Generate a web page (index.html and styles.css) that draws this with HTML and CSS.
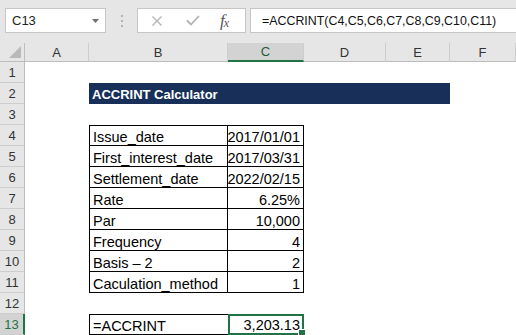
FILE: index.html
```html
<!DOCTYPE html>
<html>
<head>
<meta charset="utf-8">
<link rel="stylesheet" href="styles.css">
</head>
<body>
<div class="app">
  <div class="toolbar">
    <div class="namebox">
      <span>C13</span>
      <svg class="dd" width="7" height="4" viewBox="0 0 7 4"><path d="M0 0H7L3.5 4Z" fill="#6f6f6f"/></svg>
    </div>
    <div class="grip"><i></i><i></i><i></i></div>
    <div class="fbtns">
      <svg class="ic" width="12" height="12" viewBox="0 0 12 12"><path d="M1.5 1.5L10.5 10.5M10.5 1.5L1.5 10.5" stroke="#b3b3b3" stroke-width="1.3" fill="none"/></svg>
      <svg class="ic" width="14" height="11" viewBox="0 0 14 11"><path d="M1 5.5L5 9.5L13 1" stroke="#b3b3b3" stroke-width="1.8" fill="none"/></svg>
      <span class="fx">f<sub>x</sub></span>
    </div>
    <div class="formula">=ACCRINT(C4,C5,C6,C7,C8,C9,C10,C11)</div>
  </div>

  <div class="sheet">
    <div class="row hdr">
      <div class="ch corner"><svg width="12" height="12" viewBox="0 0 12 12"><path d="M12 0V12H0Z" fill="#b9b9b9"/></svg></div>
      <div class="ch">A</div>
      <div class="ch">B</div>
      <div class="ch selc">C</div>
      <div class="ch">D</div>
      <div class="ch">E</div>
      <div class="ch">F</div>
    </div>

    <div class="row"><div class="rh">1</div></div>
    <div class="row"><div class="rh">2</div><div></div><div class="title">ACCRINT Calculator</div></div>
    <div class="row"><div class="rh">3</div></div>
    <div class="row"><div class="rh">4</div><div></div><div class="c lb top">Issue_date</div><div class="c rb top num">2017/01/01</div></div>
    <div class="row"><div class="rh">5</div><div></div><div class="c lb">First_interest_date</div><div class="c rb num">2017/03/31</div></div>
    <div class="row"><div class="rh">6</div><div></div><div class="c lb">Settlement_date</div><div class="c rb num">2022/02/15</div></div>
    <div class="row"><div class="rh">7</div><div></div><div class="c lb">Rate</div><div class="c rb num">6.25%</div></div>
    <div class="row"><div class="rh">8</div><div></div><div class="c lb">Par</div><div class="c rb num">10,000</div></div>
    <div class="row"><div class="rh">9</div><div></div><div class="c lb">Frequency</div><div class="c rb num">4</div></div>
    <div class="row"><div class="rh">10</div><div></div><div class="c lb">Basis – 2</div><div class="c rb num">2</div></div>
    <div class="row"><div class="rh">11</div><div></div><div class="c lb">Caculation_method</div><div class="c rb num">1</div></div>
    <div class="row"><div class="rh">12</div></div>
    <div class="row"><div class="rh selr">13</div><div></div><div class="c box">=ACCRINT</div><div class="c sel num">3,203.13</div></div>
  </div>
</div>
</body>
</html>
```

FILE: styles.css
```css
* { box-sizing: border-box; }
html, body { margin: 0; padding: 0; }
body {
  background: #ffffff;
  width: 516px;
  height: 335px;
  overflow: hidden;
  font-family: "Liberation Sans", Arial, sans-serif;
}
.app { width: 516px; }

.toolbar {
  height: 43px;
  background: #e6e6e6;
  display: flex;
  align-items: flex-start;
  padding: 8px 0 0 5px;
}
.namebox {
  width: 101px;
  height: 25px;
  background: #fff;
  border: 1px solid #c6c6c6;
  display: flex;
  align-items: center;
  justify-content: space-between;
  padding: 0 6px 0 6px;
  font-size: 13px;
  color: #222;
}
.dd { margin-top: 1px; }
.grip {
  width: 31px;
  height: 25px;
  display: flex;
  flex-direction: column;
  align-items: center;
  justify-content: center;
  gap: 3px;
}
.grip i {
  display: block;
  width: 2px;
  height: 2px;
  background: #b2b2b2;
}
.fbtns {
  width: 109px;
  height: 25px;
  background: #fff;
  border: 1px solid #c6c6c6;
  display: flex;
  align-items: center;
  padding-left: 13px;
}
.fbtns .ic:nth-child(1) { margin-right: 23px; }
.fbtns .ic:nth-child(2) { margin-right: 20px; }
.fx {
  font-family: "Liberation Serif", "DejaVu Serif", serif;
  font-style: italic;
  font-size: 17px;
  color: #555;
  letter-spacing: -1px;
  line-height: 1;
}
.fx sub { font-size: 12px; vertical-align: -1px; }
.formula {
  flex: 1;
  height: 25px;
  margin-left: 4px;
  background: #fff;
  border: 1px solid #c6c6c6;
  border-right: none;
  display: flex;
  align-items: center;
  padding-left: 11px;
  font-size: 12.4px;
  color: #111;
  white-space: nowrap;
}

.sheet { background: #fff; }
.row {
  display: grid;
  grid-template-columns: 25px 64px 139px 76px 82px 64px 1fr;
  height: 21px;
}
.row.hdr { height: 19px; background: #e6e6e6; }
.ch {
  border-right: 1px solid #cdcdcd;
  border-bottom: 1px solid #bdbdbd;
  display: flex;
  align-items: center;
  justify-content: center;
  font-size: 13px;
  color: #333;
}
.ch.corner {
  justify-content: flex-end;
  align-items: flex-end;
  padding: 0 3px 3px 0;
  border-right: 1px solid #bdbdbd;
}
.ch.selc {
  background: #d3d3d3;
  color: #1f5c3a;
  border-bottom: 2px solid #217346;
}
.rh {
  background: #e6e6e6;
  border-right: 1px solid #bdbdbd;
  border-bottom: 1px solid #cdcdcd;
  display: flex;
  align-items: center;
  justify-content: center;
  font-size: 13px;
  color: #333;
}
.rh.selr {
  background: #d3d3d3;
  color: #217346;
  border-right: 2px solid #217346;
}

.title {
  grid-column: span 4;
  background: #183059;
  color: #fff;
  font-weight: bold;
  font-size: 13px;
  display: flex;
  align-items: center;
  padding: 1px 0 0 3px;
}

.c {
  display: flex;
  align-items: flex-end;
  font-size: 14.5px;
  line-height: 16px;
  color: #000;
  padding: 0 3px 0 3px;
  white-space: nowrap;
}
.c.num { justify-content: flex-end; }
.c.lb {
  border-left: 1px solid #000;
  border-right: 1px solid #000;
  border-bottom: 1px solid #000;
}
.c.rb {
  border-right: 1px solid #000;
  border-bottom: 1px solid #000;
}
.c.top { border-top: 1px solid #000; }
.c.box {
  border: 1px solid #000;
  border-right: none;
}
.c.sel {
  position: relative;
  border: 2px solid #217346;
  padding-right: 2px;
  padding-bottom: 0;
}
.c.sel::after {
  content: "";
  position: absolute;
  right: -4px;
  bottom: -4px;
  width: 6px;
  height: 6px;
  background: #217346;
  border: 1px solid #fff;
}
```
